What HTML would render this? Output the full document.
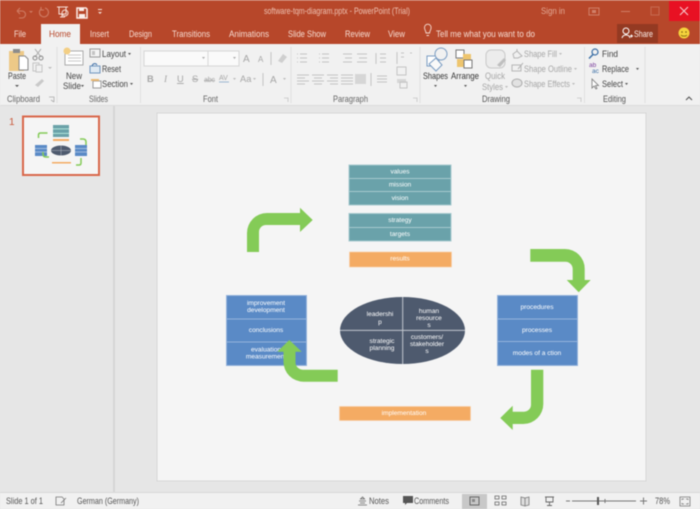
<!DOCTYPE html>
<html><head><meta charset="utf-8"><title>PowerPoint</title>
<style>
html,body{margin:0;padding:0;background:#e6e6e6;width:700px;height:509px;overflow:hidden}
svg{display:block;filter:blur(.45px)}
text{font-family:"Liberation Sans",sans-serif;font-size:9.300px;fill:#444}
.w{fill:#f6dcd2}
.g{fill:#a6a6a6}
.d{fill:#fff;font-size:6.600px;text-anchor:middle}
.ic{fill:none;stroke:#8a8a8a;stroke-width:1}
.lt{fill:none;stroke:#c4c4c4;stroke-width:1}
</style></head><body>
<svg width="700" height="509" viewBox="0 0 700 509" xmlns="http://www.w3.org/2000/svg">
<rect width="700" height="509" fill="#e6e6e6"/>
<!-- title bar -->
<rect width="700" height="44" fill="#b7472a"/>
<rect x="0" y="0" width="700" height="1" fill="#c9694f"/>
<path d="M17 11h5a3.500 3.500 0 0 1 0 7h-3M17 11l3-3M17 11l3 3" fill="none" stroke="#cf7c64" stroke-width="1.100"/>
<path d="M29 11l2 2 2-2" fill="#cf7c64"/>
<path d="M45 8a4.500 4.500 0 1 1-4 1M41 7v3h3" fill="none" stroke="#cf7c64" stroke-width="1.100"/>
<path d="M57 7h11M59 7v7h7V7M62 14v3M60 17h5" fill="none" stroke="#f6e0d8"/>
<circle cx="65" cy="13" r="3" fill="none" stroke="#f6e0d8"/>
<path d="M77 8h9l1 1v9H77z" fill="none" stroke="#fbeee9" stroke-width="1.500"/>
<rect x="79" y="8" width="5" height="3" fill="#fbeee9"/><rect x="79" y="14" width="6" height="4" fill="#fbeee9"/>
<path d="M98 9h4v1h-4zM98 12h4l-2 2z" fill="#f6dcd2"/>
<text x="264" y="14" textLength="146" lengthAdjust="spacingAndGlyphs" style="fill:#eec2b2">software-tqm-diagram.pptx  -  PowerPoint (Trial)</text>
<text x="541" y="14" textLength="24" lengthAdjust="spacingAndGlyphs" style="fill:#e3aa96">Sign in</text>
<rect x="589" y="8" width="10" height="7" fill="none" stroke="#d08069"/><rect x="592" y="10" width="4" height="3" fill="#d08069"/>
<rect x="621" y="11" width="9" height="1" fill="#cf7c64"/>
<rect x="651" y="7" width="8" height="8" fill="none" stroke="#c66a50"/>
<rect x="669" y="1" width="31" height="20" fill="#e81123"/>
<path d="M680 7l8 8M688 7l-8 8" stroke="#f6c8cc" stroke-width="1.100"/>
<!-- tabs -->
<rect x="41" y="24" width="39" height="21" fill="#f1f1f1"/>
<text class="w" x="14" y="37" textLength="12" lengthAdjust="spacingAndGlyphs">File</text>
<text x="49" y="37" textLength="22" lengthAdjust="spacingAndGlyphs" style="fill:#b7472a">Home</text>
<text class="w" x="90" y="37" textLength="19" lengthAdjust="spacingAndGlyphs">Insert</text>
<text class="w" x="129" y="37" textLength="23" lengthAdjust="spacingAndGlyphs">Design</text>
<text class="w" x="172" y="37" textLength="38" lengthAdjust="spacingAndGlyphs">Transitions</text>
<text class="w" x="229" y="37" textLength="40" lengthAdjust="spacingAndGlyphs">Animations</text>
<text class="w" x="288" y="37" textLength="38" lengthAdjust="spacingAndGlyphs">Slide Show</text>
<text class="w" x="345" y="37" textLength="25" lengthAdjust="spacingAndGlyphs">Review</text>
<text class="w" x="388" y="37" textLength="17" lengthAdjust="spacingAndGlyphs">View</text>
<path d="M426 33c0-2-1.500-3-1.500-5.500a3.300 3.300 0 0 1 6.600 0c0 2.500-1.500 3.500-1.500 5.500zM426.500 35.500h2.500" fill="none" stroke="#f6dcd2" stroke-width=".9"/>
<text class="w" x="436" y="37" textLength="99" lengthAdjust="spacingAndGlyphs">Tell me what you want to do</text>
<rect x="617" y="24" width="41" height="19" fill="#943a22"/>
<circle cx="626" cy="31" r="3" fill="none" stroke="#fff"/><path d="M622 38c1-4 7-4 8 0M630 36h3M631.500 34.500v3" fill="none" stroke="#fff"/>
<text x="634" y="37" textLength="19" lengthAdjust="spacingAndGlyphs" style="fill:#fbeee9">Share</text>
<circle cx="684" cy="33" r="5.500" fill="#f5d33c"/><circle cx="682" cy="32" r=".8" fill="#7a5c10"/><circle cx="686" cy="32" r=".8" fill="#7a5c10"/><path d="M681 35c1 1.500 5 1.500 6 0" fill="none" stroke="#7a5c10" stroke-width=".7"/>
<!-- ribbon -->
<rect x="0" y="44" width="700" height="61" fill="#f1f1f1"/>
<rect x="0" y="105" width="700" height="1" fill="#dcdcdc"/>
<path d="M57 47v56M140.500 47v56M291 47v56M420 47v56M584.500 47v56M645 47v56" stroke="#e0e0e0"/>
<!-- clipboard -->
<rect x="9" y="51" width="15" height="20" fill="#edc987"/><rect x="13" y="49" width="7" height="4" fill="#8c8c8c"/>
<path d="M19 56h6l3 3v11h-9z" fill="#fff" stroke="#888"/>
<text x="8" y="79" textLength="18" lengthAdjust="spacingAndGlyphs">Paste</text>
<path d="M15 85h4l-2 2z" fill="#555"/>
<path d="M35 49l6 8M41 49l-6 8" stroke="#aaa"/><circle cx="35" cy="58" r="2" class="ic"/><circle cx="41" cy="58" r="2" class="ic"/>
<rect x="33" y="63" width="6" height="8" class="lt"/><rect x="36" y="65" width="6" height="7" class="lt" style="fill:#f1f1f1"/>
<path d="M48 67h4l-2 2z" fill="#bbb"/>
<path d="M35 85l7-6 2 2-6 6z" fill="#c9c9c9"/>
<text x="7" y="102" textLength="33" lengthAdjust="spacingAndGlyphs" style="fill:#666">Clipboard</text>
<path d="M49 97h5v5M51 100l3 2" fill="none" stroke="#aaa" stroke-width=".8"/>
<!-- slides -->
<rect x="65" y="51" width="18" height="14" fill="#fff" stroke="#aaa"/><path d="M68 55h13M68 58h13M68 61h13" stroke="#c8c8c8"/>
<circle cx="67" cy="51" r="3.500" fill="#f3cf85"/>
<text x="66" y="79" textLength="16" lengthAdjust="spacingAndGlyphs">New</text>
<text x="63" y="89" textLength="18" lengthAdjust="spacingAndGlyphs">Slide</text><path d="M81 85h3l-1.500 2z" fill="#555"/>
<rect x="90" y="49" width="10" height="8" fill="#f4f4f4" stroke="#999"/><rect x="92" y="51" width="3" height="4" fill="#c4c4c4"/>
<text x="102" y="57" textLength="24" lengthAdjust="spacingAndGlyphs">Layout</text><path d="M128 53h3l-1.500 2z" fill="#555"/>
<rect x="90" y="66" width="10" height="7" fill="#dfe9f3" stroke="#6f95be"/><path d="M92 66c1-3 4-3 5-1" fill="none" stroke="#3c6ea8"/>
<text x="102" y="72" textLength="19" lengthAdjust="spacingAndGlyphs">Reset</text>
<rect x="93" y="81" width="8" height="7" fill="#fff" stroke="#999"/><rect x="91" y="79" width="8" height="2" fill="#e9b873"/>
<text x="102" y="87" textLength="26" lengthAdjust="spacingAndGlyphs">Section</text><path d="M130 83h3l-1.500 2z" fill="#555"/>
<text x="89" y="102" textLength="19" lengthAdjust="spacingAndGlyphs" style="fill:#666">Slides</text>
<!-- font -->
<rect x="144" y="51" width="64" height="15" fill="#fafafa" stroke="#d6d6d6"/><rect x="208" y="51" width="31" height="15" fill="#fafafa" stroke="#d6d6d6"/>
<path d="M202 57h3l-1.500 2zM233 57h3l-1.500 2z" fill="#aaa"/>
<text class="g" x="243" y="62" style="font-size:10px">A</text><text class="g" x="258" y="62" style="font-size:8px">A</text>
<path d="M271 52v13" class="lt"/><path d="M278 61l5-7 4 3-5 6z" fill="#cfcfcf"/>
<text class="g" x="147" y="82" style="font-weight:bold">B</text>
<text class="g" x="164" y="82" style="font-style:italic;font-family:'Liberation Serif'">I</text>
<text class="g" x="177" y="82" style="text-decoration:underline">U</text>
<text class="g" x="192" y="82" style="text-decoration:line-through">S</text>
<text class="g" x="204" y="82" textLength="11" style="font-size:7px;text-decoration:line-through">abc</text>
<text class="g" x="219" y="80" style="font-size:7px">AV</text><path d="M219 82h10" stroke="#9db7cf"/>
<path d="M233 78h3l-1.500 2z" fill="#bbb"/>
<text class="g" x="240" y="82">Aa</text><path d="M253 78h3l-1.500 2z" fill="#bbb"/>
<path d="M263 73v13" class="lt"/>
<text class="g" x="270" y="83" style="font-size:10px">A</text><path d="M283 78h3l-1.500 2z" fill="#bbb"/>
<text x="203" y="102" textLength="15" lengthAdjust="spacingAndGlyphs" style="fill:#666">Font</text>
<path d="M284 98h4v4" fill="none" stroke="#c4c4c4" stroke-width=".8"/>
<!-- paragraph -->
<path d="M297 54h1M300 54h7M297 58h1M300 58h7M297 62h1M300 62h7M319 54h1M322 54h7M319 58h1M322 58h7M319 62h1M322 62h7M343 54h9M345 58h7M343 62h9M357 54h10M359 58h8M357 62h10M376 53v11M380 54h6M380 58h6M380 62h6M397 52v12M401 53h3M401 57h3M410 53h2" class="lt"/>
<path d="M297 75h12M297 78h8M297 81h12M297 84h8M312 75h12M314 78h8M312 81h12M314 84h8M327 75h11M330 78h8M327 81h11M330 84h8M341 75h12M341 78h12M341 81h12M341 84h12" class="lt"/>
<rect x="355" y="74" width="11" height="10" fill="#d6d6d6"/>
<path d="M371 73v13" class="lt"/>
<path d="M377 76h10M377 79h10M377 82h10" class="lt"/>
<rect x="397" y="67" width="9" height="8" class="lt"/><rect x="397" y="79" width="9" height="4" fill="#d6d6d6"/><rect x="400" y="82" width="7" height="6" class="lt"/>
<text x="333" y="102" textLength="35" lengthAdjust="spacingAndGlyphs" style="fill:#666">Paragraph</text>
<path d="M413 98h4v4" fill="none" stroke="#c4c4c4" stroke-width=".8"/>
<!-- drawing -->
<rect x="427" y="56" width="12" height="10" fill="#fff" stroke="#7a9cc2"/>
<circle cx="441" cy="54" r="6" fill="#f1f1f1" stroke="#7a9cc2"/>
<path d="M436 58l6 7-6 6-7-7z" fill="#f9f9f9" stroke="#7a9cc2"/>
<text x="423" y="79" textLength="25" lengthAdjust="spacingAndGlyphs" style="fill:#333">Shapes</text>
<path d="M434 85h3l-1.500 2z" fill="#555"/>
<rect x="456" y="50" width="8" height="8" fill="#fff" stroke="#777"/><rect x="463" y="54" width="8" height="8" fill="#eec56e"/><rect x="457" y="59" width="8" height="8" fill="#eec56e"/><rect x="464" y="60" width="8" height="8" fill="#fff" stroke="#777"/>
<text x="451" y="79" textLength="28" lengthAdjust="spacingAndGlyphs" style="fill:#333">Arrange</text>
<path d="M464 85h3l-1.500 2z" fill="#555"/>
<rect x="486" y="50" width="19" height="18" rx="5" fill="#ececec" stroke="#c9c9c9"/>
<path d="M497 65l7-7 2 2-6 7z" fill="#bfbfbf"/>
<text class="g" x="485" y="79" textLength="20" lengthAdjust="spacingAndGlyphs">Quick</text>
<text class="g" x="482" y="90" textLength="21" lengthAdjust="spacingAndGlyphs">Styles</text><path d="M505 86h3l-1.500 2z" fill="#bbb"/>
<path d="M513 54l4-3 5 5-4 2h-4zM517 49v3" fill="none" stroke="#b5b5b5"/>
<text class="g" x="524" y="57" textLength="33" lengthAdjust="spacingAndGlyphs">Shape Fill</text><path d="M559 53h3l-1.500 2z" fill="#bbb"/>
<path d="M512 65h9v6h-9zM518 69l5-6" fill="none" stroke="#b5b5b5"/>
<text class="g" x="524" y="72" textLength="48" lengthAdjust="spacingAndGlyphs">Shape Outline</text><path d="M574 68h3l-1.500 2z" fill="#bbb"/>
<ellipse cx="517" cy="83" rx="5" ry="4" fill="#e2e2e2" stroke="#aaa"/>
<text class="g" x="524" y="87" textLength="46" lengthAdjust="spacingAndGlyphs">Shape Effects</text><path d="M572 83h3l-1.500 2z" fill="#bbb"/>
<text x="482" y="102" textLength="28" lengthAdjust="spacingAndGlyphs" style="fill:#555">Drawing</text>
<path d="M577 98h4v4" fill="none" stroke="#c4c4c4" stroke-width=".8"/>
<!-- editing -->
<circle cx="595" cy="52" r="3" fill="none" stroke="#3a6ea5" stroke-width="1.200"/><path d="M593 54.500l-4 4" stroke="#3a6ea5" stroke-width="1.500"/>
<text x="602" y="57" textLength="16" lengthAdjust="spacingAndGlyphs">Find</text>
<text x="589" y="67" style="font-size:6.500px;fill:#7a3f9c">ab</text><text x="592" y="73" style="font-size:6.500px;fill:#3a6ea5">ac</text>
<text x="602" y="72" textLength="27" lengthAdjust="spacingAndGlyphs">Replace</text><path d="M636 68h3l-1.500 2z" fill="#555"/>
<path d="M592 79v9l2-2 2 3 1-.5-1.500-3h3z" fill="#fff" stroke="#777" stroke-width=".8"/>
<text x="602" y="87" textLength="21" lengthAdjust="spacingAndGlyphs">Select</text><path d="M625 83h3l-1.500 2z" fill="#555"/>
<text x="603" y="102" textLength="23" lengthAdjust="spacingAndGlyphs" style="fill:#555">Editing</text>
<path d="M686 100l3-3 3 3" fill="none" stroke="#555" stroke-width="1.100"/>
<!-- panes -->
<rect x="113" y="106" width="2" height="387" fill="#d6d6d6"/>
<text x="9" y="125" style="font-size:10px;fill:#c9593a">1</text>
<rect x="23" y="116.500" width="76" height="58.500" fill="#f5f5f5" stroke="#d9674a" stroke-width="2"/>
<rect x="53" y="125" width="16" height="12" fill="#6ba2a9"/><rect x="53" y="128.500" width="16" height=".7" fill="#cfe"/><rect x="53" y="133" width="16" height=".7" fill="#cfe"/>
<rect x="53" y="139" width="16" height="2" fill="#f4ab63"/>
<rect x="35" y="145" width="12" height="11" fill="#5a8ac6"/><rect x="75" y="145" width="12" height="11" fill="#5a8ac6"/>
<path d="M35 148.500h12M35 152h12M75 148.500h12M75 152h12" stroke="#b6cbe6" stroke-width=".7"/>
<ellipse cx="61" cy="150.500" rx="10" ry="5" fill="#4e5a6e"/><path d="M51 150.500h20M61 145.500v10" stroke="#b9bfc9" stroke-width=".5"/>
<rect x="52" y="162" width="19" height="1.500" fill="#f4ab63"/>
<path d="M38.500 138v-3q0-2 2-2h7M80 139h3q3 0 3 3v3M81 158v5q0 2-2 2h-3M49 157h-3q-3 0-3-3v-2" fill="none" stroke="#84cb57" stroke-width="1.500"/>
<!-- slide -->
<rect x="157" y="113" width="489" height="368" fill="#f5f5f5" stroke="#d6d6d6"/>
<!-- teal -->
<g fill="#6aa2aa" stroke="#a6c9ce" stroke-width="1">
<rect x="349" y="165" width="102" height="13.500"/><rect x="349" y="178.500" width="102" height="13"/><rect x="349" y="191.500" width="102" height="13.500"/>
<rect x="349" y="213.500" width="102" height="14"/><rect x="349" y="227.500" width="102" height="13.500"/>
</g>
<rect x="349.500" y="252" width="102" height="15" fill="#f4ab63" stroke="#f8cda0" stroke-width=".6"/>
<text class="d" x="400" y="173.500">values</text><text class="d" x="400" y="186.500">mission</text><text class="d" x="400" y="200">vision</text>
<text class="d" x="400" y="222">strategy</text><text class="d" x="400" y="236">targets</text><text class="d" x="400" y="260.500">results</text>
<!-- blue -->
<g fill="#5a8ac6" stroke="#95b4dc" stroke-width="1">
<rect x="226.500" y="295.500" width="80" height="23.500"/><rect x="226.500" y="319" width="80" height="23"/><rect x="226.500" y="342" width="80" height="23.500"/>
<rect x="497.500" y="295.500" width="80" height="23.500"/><rect x="497.500" y="319" width="80" height="22.500"/><rect x="497.500" y="341.500" width="80" height="24"/>
</g>
<text class="d" x="266" y="305">improvement</text><text class="d" x="266" y="312">development</text>
<text class="d" x="266" y="332">conclusions</text>
<text class="d" x="266" y="351.500">evaluation</text><text class="d" x="266" y="358.500">measurement</text>
<text class="d" x="537" y="309">procedures</text><text class="d" x="537" y="332">processes</text><text class="d" x="537" y="355">modes of a ction</text>
<!-- ellipse -->
<ellipse cx="402.500" cy="330.500" rx="62.500" ry="33.500" fill="#4e5a6e"/>
<path d="M402.700 297v67M340 330.400h125" stroke="#c3c8d0" stroke-width="1"/>
<text class="d" x="380" y="316">leadershi</text><text class="d" x="380" y="324">p</text>
<text class="d" x="429" y="313">human</text><text class="d" x="429" y="320">resource</text><text class="d" x="429" y="327">s</text>
<text class="d" x="382" y="343">strategic</text><text class="d" x="382" y="350">planning</text>
<text class="d" x="427" y="339">customers/</text><text class="d" x="427" y="346">stakeholder</text><text class="d" x="427" y="353">s</text>
<rect x="339.500" y="406.500" width="131" height="14" fill="#f4ab63" stroke="#f8cda0" stroke-width=".6"/>
<text class="d" x="404" y="415">implementation</text>
<!-- arrows -->
<g fill="#84cb57">
<path d="M247 252V233A20 20 0 0 1 267 213H300V207.700L312.700 220 300 232V225H266A7 7 0 0 0 259 232V252Z"/>
<path d="M530.300 249H565A19.700 19.700 0 0 1 584.700 268.700V280H590.700L578.700 292.300 566.700 280H572.700V269A7.300 7.300 0 0 0 565.400 261.700H530.300Z"/>
<path d="M531 369.700H543.300V404A20 20 0 0 1 523.300 424H512.700V430L500.300 418 512.700 405.700V411.700H524A7 7 0 0 0 531 404.700Z"/>
<path d="M337.700 381.700H303.500A20 20 0 0 1 283.500 361.700V351.700H277.300L289.300 340 301.700 351.700H295.500V362.400A7.300 7.300 0 0 0 302.800 369.700H337.700Z"/>
</g>
<!-- status -->
<rect x="0" y="493" width="700" height="16" fill="#f1f1f1"/>
<rect x="0" y="492" width="700" height="1" fill="#d8d8d8"/>
<text x="6" y="504" textLength="37" lengthAdjust="spacingAndGlyphs" style="fill:#555">Slide 1 of 1</text>
<path d="M56 497h6l2 2v6h-8zM61 503l5-5" fill="none" stroke="#777" stroke-width=".8"/>
<text x="77" y="504" textLength="62" lengthAdjust="spacingAndGlyphs" style="fill:#555">German (Germany)</text>
<path d="M359 501h7M360 503h5M358 505h9M362.500 497l-2 2h4z" fill="none" stroke="#666" stroke-width=".8"/>
<text x="369" y="504" textLength="20" lengthAdjust="spacingAndGlyphs" style="fill:#555">Notes</text>
<path d="M403 496h10v7h-6l-2 2v-2h-2z" fill="#555"/>
<text x="414" y="504" textLength="35" lengthAdjust="spacingAndGlyphs" style="fill:#555">Comments</text>
<rect x="462" y="494" width="25" height="15" fill="#c8c8c8"/>
<rect x="470" y="497" width="9" height="8" fill="none" stroke="#666"/><rect x="472" y="499" width="3" height="3" fill="#888"/>
<path d="M495 496h4v3h-4zM502 496h4v3h-4zM495 502h4v3h-4zM502 502h4v3h-4z" fill="none" stroke="#666" stroke-width=".8"/>
<path d="M521 497l4 1 4-1v8l-4 1-4-1zM525 498v8" fill="#ddd" stroke="#777" stroke-width=".8"/>
<path d="M545 497h9M546 497v5h7v-5M549.500 502v3M547 505.500h5" fill="none" stroke="#666" stroke-width=".9"/>
<path d="M566 501h4M572 501h64M605 499v4M640 501h7M643.500 497.500v7" stroke="#777"/>
<rect x="597" y="497" width="2" height="8" fill="#555"/>
<text x="655" y="504" textLength="15" lengthAdjust="spacingAndGlyphs" style="fill:#555">78%</text>
<path d="M680 497h10v9h-10zM682 500v-1h2M688 500v-1h-2M682 503v1h2M688 503v1h-2" fill="none" stroke="#777" stroke-width=".8"/>
</svg>
</body></html>
